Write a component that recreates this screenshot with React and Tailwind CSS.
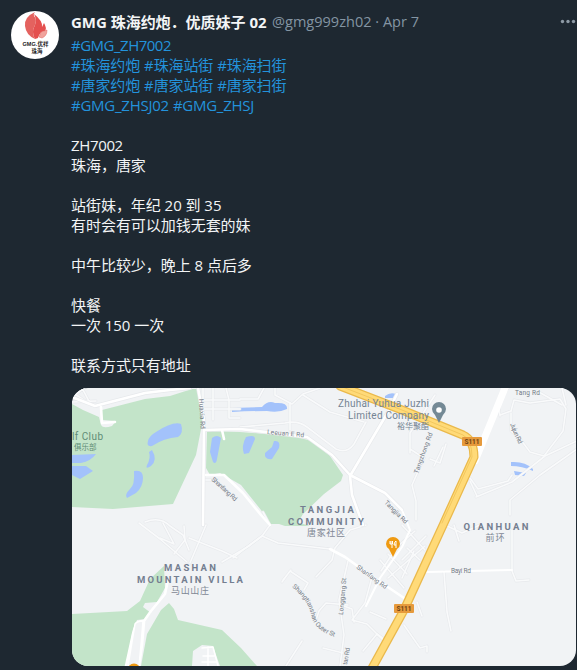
import React from "react";

const TAGS = [
  ["#GMG_ZH7002"],
  ["#珠海约炮", "#珠海站街", "#珠海扫街"],
  ["#唐家约炮", "#唐家站街", "#唐家扫街"],
  ["#GMG_ZHSJ02", "#GMG_ZHSJ"],
];

const LINES = [
  "",
  "ZH7002",
  "珠海，唐家",
  "",
  "站街妹，年纪 20 到 35",
  "有时会有可以加钱无套的妹",
  "",
  "中午比较少，晚上 8 点后多",
  "",
  "快餐",
  "一次 150 一次",
  "",
  "联系方式只有地址",
];

const MINOR_ROADS = [
  "M72 398L84 388M82 388L91 405M72 402L96 401M72 392L88 403",
  "M203 388V400H240M213 388V420M226 388L229 400V418H240M204 409H240",
  "M240 399H258L264 388M275 388V395L292 404L303 394L320 388",
  "M290 403V430M303 395L330 412L364 422",
  "M240 427L285 423Q298 420 307 427L336 449Q347 454 354 444L366 422",
  "M204 480H218M145 522Q160 516 170 526L183 535L189 550",
  "M139 523L160 539L187 562M163 523L174 544L160 538M184 526L185 540L174 554",
  "M206 525L190 563M189 538L222 551L237 558M222 562L249 546L262 536",
  "M262 536Q248 546 233 558M262 536L270 525L263 512M262 536L278 543L330 549",
  "M366 525L350 530L335 548L332 560L316 577",
  "M282 582L290 571L308 583L304 590M291 570L283 580",
  "M348 561L339 600L344 635L340 666M348 605L326 603L319 611L316 620",
  "M344 606L352 609L354 622M372 577L365 603L352 620L367 624L383 640",
  "M363 651L377 634L388 642M323 648L343 653M286 666L302 641",
  "M410 453V433L435 395M410 449L424 458M430 459L440 463L446 444M434 466L443 447",
  "M424 458L412 485L416 501V520M500 416L498 402L508 388M500 415L511 411",
  "M511 411L514 400L530 403L560 399L566 409L563 431L544 456L530 452L521 440L511 431V413",
  "M562 388L566 405M537 391L562 405",
  "M577 441L545 456L512 482L476 497M577 449L540 475L510 500V515",
  "M470 478L478 489L508 481L512 475M470 481L477 496",
  "M512 530V571L516 581L529 580M445 525L462 533L480 525M454 525L459 541",
  "M444 572L447 612L451 631M404 625L420 648L427 646L427 652M417 602L422 616",
  "M380 560L404 588M388 578L425 546M381 571L397 547L415 531M388 554L407 574M407 548L420 560",
  "M402 525L425 550M402 560L426 536M402 578L414 551M370 612L386 619",
];

function GreenAreas() {
  return (
    <g fill="#c3e4c9">
      <path d="M72 404L83 410L99 417L101 425Q103 429 112 426L116 421L102 420V410L145 399L170 396L192 389L199 389L203 419L196 455L173 504L113 509L72 507Z" />
      <path d="M207 431L240 432L292 436L312 441L330 456L343 475L341 481L324 494L303 514L297 524H270L261 510L241 485L220 473L210 475L206 468Z" />
      <path d="M72 614L127 611L140 601L150 579L164 566L165 588L157 602L145 603L143 607L151 613L146 619L137 620L132 634L126 666H72Z" />
      <path d="M141 666L147 634L161 610L169 603L174 609L178 620L222 630L241 648L257 666H220L216 655L213 646L202 645L193 651L192 666Z" />
      <path d="M276 523H300L310 526H285Z" />
    </g>
  );
}

function Water() {
  return (
    <g fill="#a3c2fb">
      <path d="M148 441Q149 436 156 432Q173 421 181 424Q184 433 178 437Q164 438 152 446Q146 447 148 441Z" />
      <path d="M152 450Q158 460 151 466Q145 470 147 465Q151 458 149 452Z" />
      <path d="M134 471Q143 469 143 478Q143 487 136 493L127 498Q124 495 130 489Q135 485 134 471Z" />
      <path d="M72 455L96 454Q91 461 81 463H72ZM72 466L86 466L93 471L80 479L72 475Z" />
      <path d="M212 438Q217 434 221 438L217 459Q216 465 213 462L210 452Z" />
      <path d="M232 408L262 407Q268 400 275 403Q288 402 287 409Q279 413 267 411Q250 411 232 412Z" />
      <path d="M246 437Q255 434 255 439L249 453L244 454Q241 446 246 437Z" />
      <path d="M274 441Q281 440 279 448L272 459Q264 460 265 453L272 447Z" />
      <path d="M385 396Q390 392 396 394L393 398L385 398Z" />
      <path d="M511 462Q525 461 533 469V471Q522 466 511 466ZM514 471L526 473L524 476L515 475Z" />
    </g>
  );
}

function Roads() {
  return (
    <g fill="none" strokeLinejoin="round" strokeLinecap="round">
      {MINOR_ROADS.map((d) => (
        <path key={d} d={d} stroke="#e7e9ec" strokeWidth="2.8" />
      ))}
      {MINOR_ROADS.map((d) => (
        <path key={d} d={d} stroke="#f9fafb" strokeWidth="1.6" />
      ))}
      <g stroke="#e7e9ec" strokeWidth="4">
        <path d="M72 397L95 406L145 393L170 390L190 388M198 388L204 420L203 525" />
        <path d="M204 430L240 429L307 437L332 455L350 475L385 493L402 510" />
        <path d="M350 476L388 412L397 394M350 476L352 495L363 525" />
      </g>
      <g stroke="#fff" strokeWidth="2.6">
        <path d="M72 397L95 406L145 393L170 390L190 388M101 407L102 423L115 422M198 388L204 420L203 525" />
        <path d="M204 430L240 429L307 437L332 455L350 475L385 493L402 510" />
        <path d="M350 476L388 412L397 394M350 476L352 495L363 525M222 430L224 439" />
        <path d="M206 475L224 475L243 493L261 515L270 525M330 549L345 557L370 575L407 600" />
        <path d="M402 510L410 530L402 547L380 578L366 606M427 572L512 570" strokeWidth="2" />
        <path d="M126 666L133 634Q136 620 144 621L151 611L165 594L168 580M144 622L142 645L139 666" />
        <path d="M202 648L213 647L218 666M203 656H214M202 662H217M208 647V666" strokeWidth="1.5" />
      </g>
      <path d="M135 624Q137 621 143 621L141 645L139 666H128Z" fill="#f1f3f5" stroke="#fff" strokeWidth="1.5" />
      <path d="M505 388L475 461" stroke="#fff" strokeWidth="7" />
      <path d="M340 386L402 410L463 435Q474 440 474 457L444 523L404 610L371 670" stroke="#eab94c" strokeWidth="9" />
      <path d="M340 386L402 410L463 435Q474 440 474 457L444 523L404 610L371 670" stroke="#ffda78" strokeWidth="6.5" />
      <path d="M340 386L402 410L463 435Q472 440 472 457L442 523" stroke="#f2c75f" strokeWidth="1" />
    </g>
  );
}

function Labels() {
  return (
    <g fill="#747b86" fontFamily='Roboto, "Noto Sans CJK SC", sans-serif'>
      <g fill="#5f8c76" fontSize="10">
        <text x="72" y="440" textLength="31">lf Club</text>
        <text x="74" y="450" fontSize="7.5">俱乐部</text>
      </g>
      <g fill="#748493" fontSize="10" textAnchor="end">
        <text x="429" y="407" textLength="91">Zhuhai Yuhua Juzhi</text>
        <text x="429" y="419" textLength="81">Limited Company</text>
        <text x="429" y="429" fontSize="8">裕华聚酯</text>
      </g>
      <g fill="#747e90" fontSize="9.5" fontWeight="700" textAnchor="middle">
        <text x="327" y="513" textLength="54">TANGJIA</text>
        <text x="326" y="525" textLength="76">COMMUNITY</text>
        <text x="190" y="571" textLength="52">MASHAN</text>
        <text x="190" y="583" textLength="106">MOUNTAIN VILLA</text>
        <text x="496" y="530" textLength="65">QIANHUAN</text>
      </g>
      <g fill="#7f8794" fontSize="9" textAnchor="middle">
        <text x="326" y="536" textLength="38">唐家社区</text>
        <text x="190" y="594" textLength="38">马山山庄</text>
        <text x="495" y="541" textLength="19">前环</text>
      </g>
      <g fontSize="6.5">
        <text transform="translate(199 399) rotate(87)" textLength="30">Huaxia Rd</text>
        <text transform="translate(267 434) rotate(5)" textLength="37">Leeuan E Rd</text>
        <text transform="translate(211 480) rotate(42)" textLength="32">Shanfang Rd</text>
        <text transform="translate(384 503) rotate(45)" textLength="30">Tangjia Rd</text>
        <text transform="translate(418 474) rotate(-70)" textLength="43">Tangzhong Rd</text>
        <text x="515" y="395" textLength="25">Tang Rd</text>
        <text transform="translate(510 424) rotate(67)" textLength="22">Jujun Rd</text>
        <text transform="translate(356 568) rotate(36)" textLength="36">Shanfang Rd</text>
        <text transform="translate(343 615) rotate(-85)" textLength="37">Longgang St</text>
        <text x="451" y="573" textLength="20">Bayi Rd</text>
        <text transform="translate(347 665) rotate(-80)" textLength="17">tan Rd</text>
        <path id="curved-street" d="M292 587Q308 600 311 614Q314 631 336 637" fill="none" />
        <text>
          <textPath href="#curved-street" textLength="68">Shangtianshan Outer St</textPath>
        </text>
      </g>
      <g fontSize="6.5" fontWeight="700" textAnchor="middle">
        <rect x="462" y="437" width="20" height="9" rx="1" fill="#e69a3c" />
        <text x="472" y="444" fill="#6f4315">S111</text>
        <rect x="394" y="604" width="20" height="9" rx="1" fill="#e69a3c" />
        <text x="404" y="611" fill="#6f4315">S111</text>
      </g>
    </g>
  );
}

function Pins() {
  return (
    <g>
      <path d="M439 423L435 415Q432 412 432 409A7 7 0 0 1 446 409Q446 412 443 415Z" fill="#748995" />
      <circle cx="439" cy="410" r="2.8" fill="#fff" />
      <path d="M393 557L389 549Q386 547 386 544A7 7 0 0 1 400 544Q400 547 397 549Z" fill="#ef9a12" />
      <path d="M390 541V544H392V548M391 541V544M392.5 541V544M396 548V541Q394 542 394 545H396" fill="none" stroke="#fff" strokeWidth="1" />
      <circle cx="134" cy="670" r="6.5" fill="#ef9a12" />
    </g>
  );
}

function MapCard() {
  return (
    <div className="mt-[13px] h-[278px] w-[504px] overflow-hidden rounded-2xl bg-[#f1f3f5]">
      <svg className="block h-[278px] w-[505px]" viewBox="72 388 505 278">
        <GreenAreas />
        <Water />
        <Roads />
        <Labels />
        <Pins />
      </svg>
    </div>
  );
}

function Avatar() {
  return (
    <svg className="mt-[11px] block h-12 w-12 shrink-0" viewBox="0 0 48 48">
      <circle cx="24" cy="24" r="24" fill="#fff" />
      <path d="M24 1Q13 6 14 15Q15 24 24 28Q20 21 24 14Q26 8 23 5Q22 3 24 1Z" fill="#e4625f" />
      <path d="M23 3Q32 10 31 16L33 12Q36 17 34 20Q29 20 27 27L24 28Q20 21 24 14Q26 9 23 3Z" fill="#e4504f" />
      <path d="M28 26L30 21L36 19Q36 25 31 27Z" fill="#f0a39c" stroke="#e4625f" strokeWidth=".5" />
      <g fill="#222" fontFamily='"Liberation Sans", "Noto Sans CJK SC", sans-serif' fontWeight="700" fontSize="5.5" textAnchor="middle">
        <text x="24.5" y="35" textLength="26">GMG.优祥</text>
        <text x="26" y="42">珠海</text>
      </g>
    </svg>
  );
}

export default function App() {
  return (
    <div className="flex h-[670px] w-[577px] gap-3 overflow-hidden bg-[#1e2831] pl-[11px] font-['Open_Sans','Noto_Sans_CJK_SC',sans-serif] text-[15px] leading-5 text-[#f3f5f6]">
      <Avatar />
      <div className="w-[506px] shrink-0 pt-3">
        <div className="flex h-5 items-center whitespace-pre">
          <span className="w-[201px] text-[15px] font-bold tracking-[-0.02px]">GMG 珠海约炮．优质妹子 02</span>
          <span className="text-[14.5px] tracking-[0.02px] text-[#8495a3]">@gmg999zh02 · Apr 7</span>
          <svg className="mr-[1px] ml-auto block h-5 w-4 shrink-0" viewBox="0 0 16 20" fill="#8e9aa5">
            <circle cx="2.5" cy="9.5" r="1.7" />
            <circle cx="8" cy="9.5" r="1.7" />
            <circle cx="13.5" cy="9.5" r="1.7" />
          </svg>
        </div>
        <div className="mt-[3px]">
          {TAGS.map((row) => (
            <div key={row[0]} className="flex h-5 gap-1 whitespace-pre text-[#2393dc]">
              {row.map((tag) => (
                <span key={tag} className={row.length === 2 ? "tracking-[-0.25px]" : row.length === 1 ? "tracking-[-0.5px]" : "tracking-[-0.12px]"}>{tag}</span>
              ))}
            </div>
          ))}
          {LINES.map((line, i) => (
            <div key={i} className={line === "ZH7002" ? "h-5 whitespace-pre tracking-[-0.35px]" : "h-5 whitespace-pre tracking-[-0.04px]"}>{line}</div>
          ))}
        </div>
        <div className="pl-[1px]">
          <MapCard />
        </div>
      </div>
    </div>
  );
}
